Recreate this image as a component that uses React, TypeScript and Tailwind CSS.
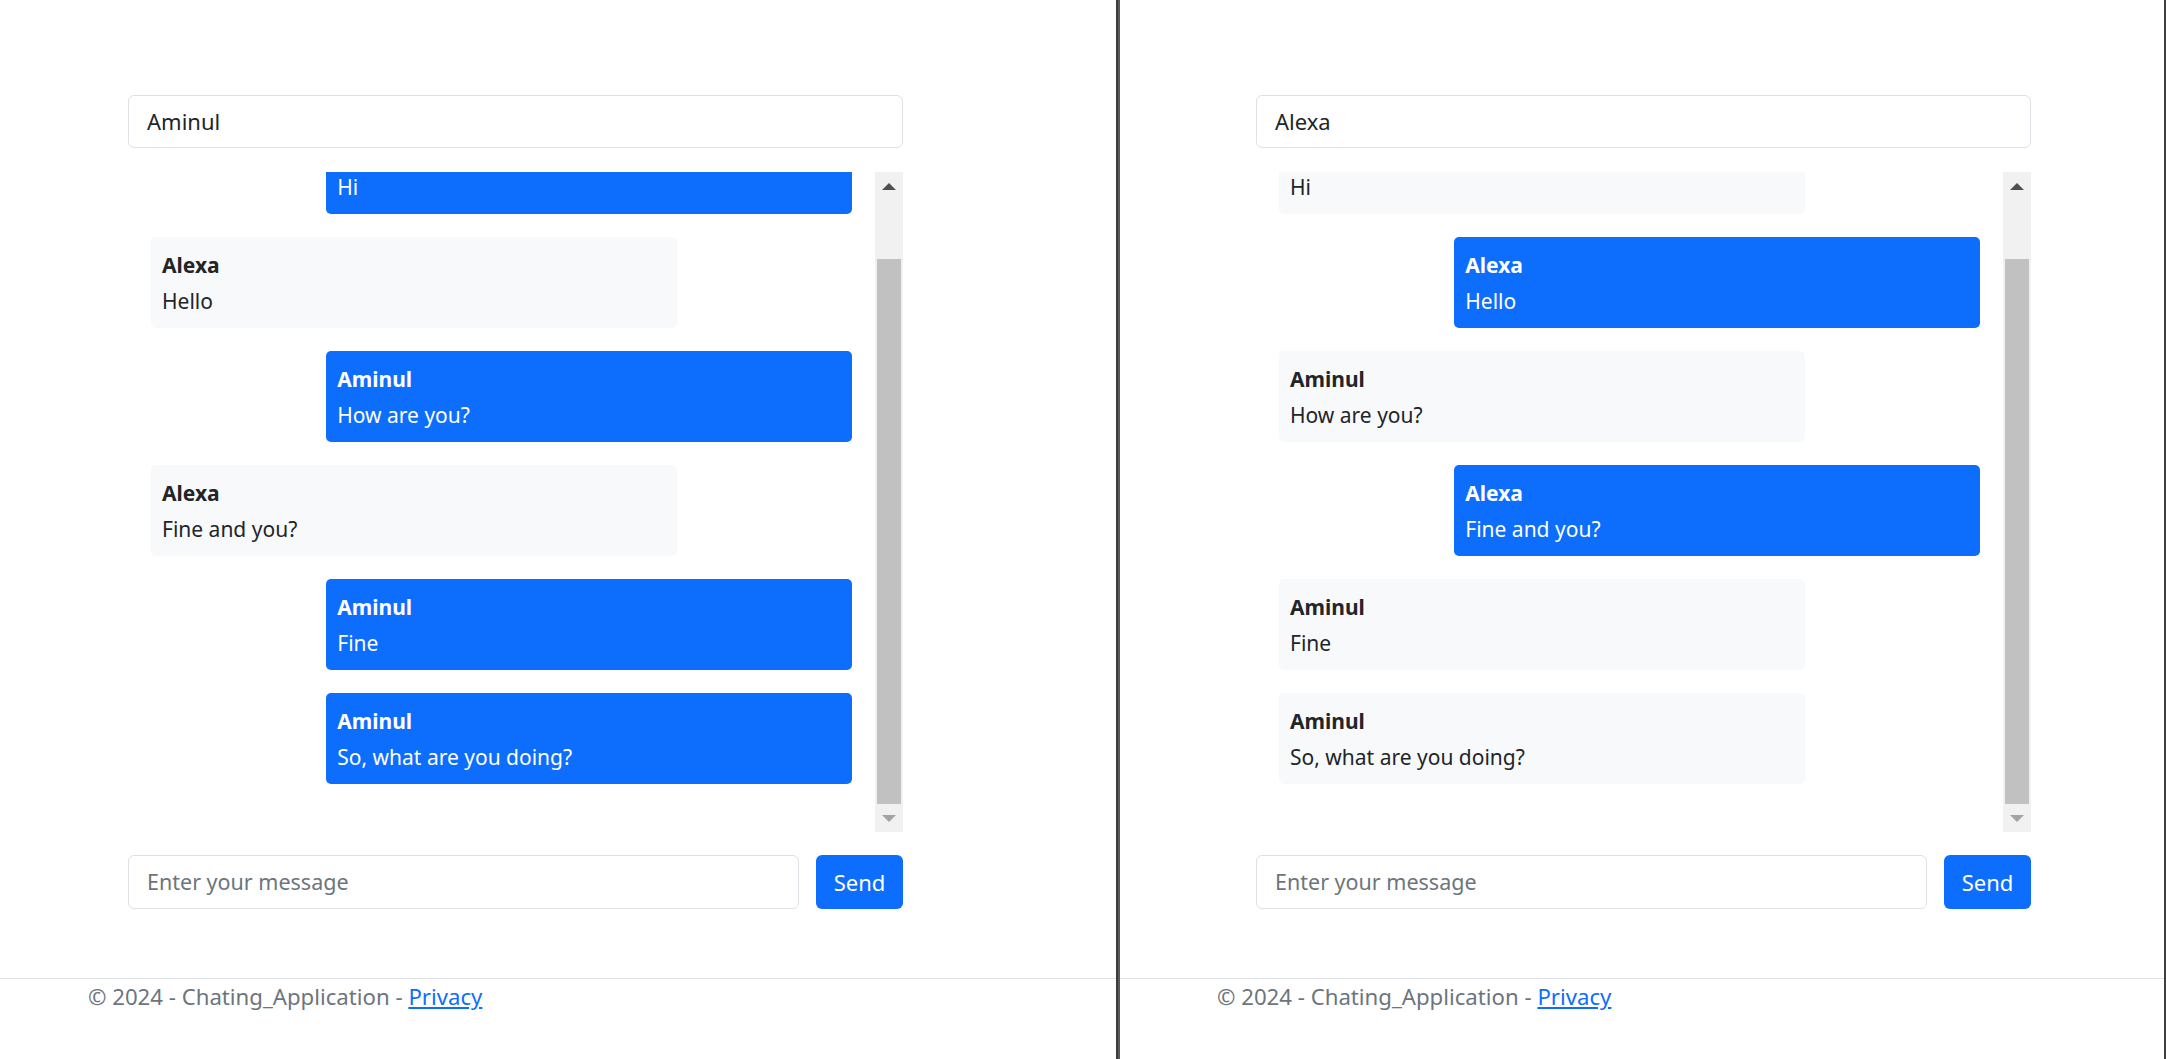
import React from "react";

type Msg = { name: string; text: string; mine: boolean };

const leftMsgs: Msg[] = [
  { name: "Aminul", text: "Hi", mine: true },
  { name: "Alexa", text: "Hello", mine: false },
  { name: "Aminul", text: "How are you?", mine: true },
  { name: "Alexa", text: "Fine and you?", mine: false },
  { name: "Aminul", text: "Fine", mine: true },
  { name: "Aminul", text: "So, what are you doing?", mine: true },
];

const rightMsgs: Msg[] = [
  { name: "Aminul", text: "Hi", mine: false },
  { name: "Alexa", text: "Hello", mine: true },
  { name: "Aminul", text: "How are you?", mine: false },
  { name: "Alexa", text: "Fine and you?", mine: true },
  { name: "Aminul", text: "Fine", mine: false },
  { name: "Aminul", text: "So, what are you doing?", mine: false },
];

function Bubble({ m }: { m: Msg }) {
  return (
    <div
      className={
        m.mine
          ? "mb-[23px] h-[91px] w-[75%] shrink-0 self-end rounded-[5px] bg-[#0d6efd] px-[11px] py-[9.5px] text-[21px] leading-[36px] text-white"
          : "mb-[23px] h-[91px] w-[75%] shrink-0 self-start rounded-[5px] bg-[#f8f9fa] px-[11px] py-[9.5px] text-[21px] leading-[36px] text-[#212529]"
      }
    >
      <div className="font-bold">{m.name}</div>
      <div>{m.text}</div>
    </div>
  );
}

function Scrollbar() {
  return (
    <div className="flex w-[28px] shrink-0 flex-col bg-[#f1f1f1]">
      <div className="flex h-[28px] items-center justify-center">
        <svg width="14" height="7" viewBox="0 0 14 7">
          <polygon points="0,7 7,0 14,7" fill="#505050" />
        </svg>
      </div>
      <div className="flex flex-1 flex-col px-[2px] pt-[59px]">
        <div className="flex-1 bg-[#c1c1c1]" />
      </div>
      <div className="flex h-[28px] items-center justify-center">
        <svg width="14" height="7" viewBox="0 0 14 7">
          <polygon points="0,0 14,0 7,7" fill="#a3a3a3" />
        </svg>
      </div>
    </div>
  );
}

function Panel({
  user,
  msgs,
  width,
  contentLeft,
  footerLeft,
}: {
  user: string;
  msgs: Msg[];
  width: string;
  contentLeft: string;
  footerLeft: string;
}) {
  return (
    <div className={`flex h-full shrink-0 flex-col bg-white ${width}`}>
      <div className={`flex h-[978px] flex-col pt-[95px] ${contentLeft}`}>
        <div className="w-[775px]">
          <div className="flex h-[53px] items-center rounded-[6px] border border-[#dee2e6] bg-white pl-[18px] text-[22px] text-[#212529]">
            {user}
          </div>
          <div className="mt-[24px] flex h-[660px]">
            <div className="flex-1 overflow-hidden px-[23px]">
              <div className="-mt-[49px] flex flex-col">
                {msgs.map((m, i) => (
                  <Bubble key={i} m={m} />
                ))}
              </div>
            </div>
            <Scrollbar />
          </div>
          <div className="mt-[23px] flex h-[54px] gap-[17px]">
            <div className="flex flex-1 items-center rounded-[6px] border border-[#dee2e6] bg-white pl-[18px] text-[21.5px] text-[#6c757d]">
              Enter your message
            </div>
            <div className="flex w-[87px] items-center justify-center rounded-[6px] bg-[#0d6efd] text-[22px] text-white">
              Send
            </div>
          </div>
        </div>
      </div>
      <div className="border-t border-[#dee2e6]">
        <div className={`text-[22.2px] leading-[36px] text-[#6c757d] ${footerLeft}`}>
          © 2024 - Chating_Application -{" "}
          <a href="#" className="text-[#0d6efd] underline">
            Privacy
          </a>
        </div>
      </div>
    </div>
  );
}

export default function App() {
  return (
    <div className="flex h-[1059px] w-[2166px] overflow-hidden bg-white font-['Noto_Sans',sans-serif]">
      <Panel
        user="Aminul"
        msgs={leftMsgs}
        width="w-[1116px]"
        contentLeft="pl-[128px]"
        footerLeft="pl-[88px]"
      />
      <div className="flex w-[4px] shrink-0">
        <div className="w-[2px] bg-[#3c3c3c]" />
        <div className="w-[2px] bg-[#5a5a5a]" />
      </div>
      <Panel
        user="Alexa"
        msgs={rightMsgs}
        width="w-[1044px]"
        contentLeft="pl-[136px]"
        footerLeft="pl-[97px]"
      />
      <div className="w-[2px] shrink-0 bg-[#3f3f3f]" />
    </div>
  );
}
